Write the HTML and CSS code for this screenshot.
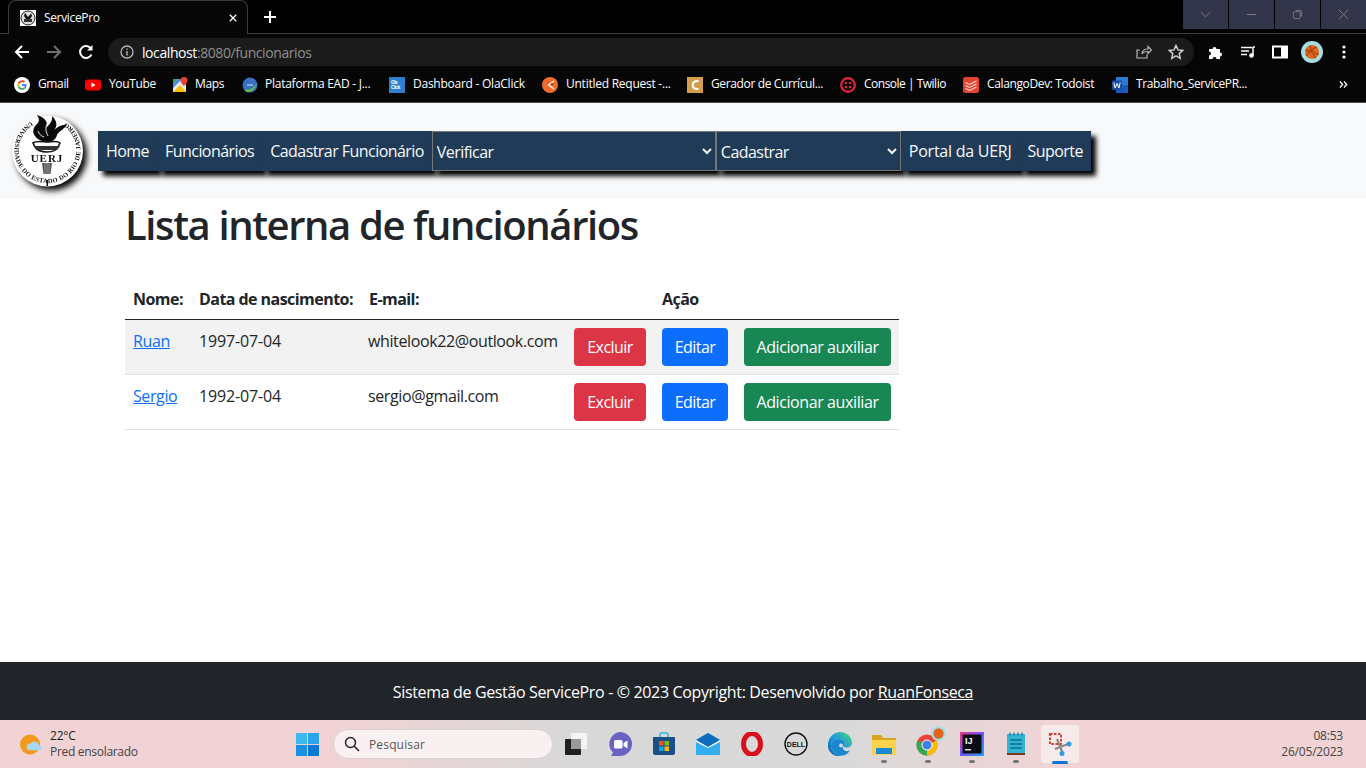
FILE: index.html
```html
<!DOCTYPE html>
<html lang="pt-BR">
<head>
<meta charset="utf-8">
<title>ServicePro</title>
<link rel="stylesheet" href="styles.css">
</head>
<body>
<div class="browser">
  <div class="tabbar">
    <div class="tab">
      <svg class="favicon" viewBox="0 0 16 16"><rect width="16" height="16" fill="#fff"/><circle cx="8" cy="8" r="7" fill="#ddd" stroke="#222"/><path d="M5 3c2 1 1 3 3 4 1-2 3-2 3-4l1 3-2 3H6L4 6z" fill="#111"/><rect x="4" y="9" width="8" height="3" fill="#333"/></svg>
      <span class="tab-title">ServicePro</span>
      <svg class="tab-close" viewBox="0 0 10 10"><path d="M1 1l8 8M9 1l-8 8" stroke="#fff" stroke-width="1.600"/></svg>
    </div>
    <svg class="newtab" viewBox="0 0 12 12"><path d="M6 0v12M0 6h12" stroke="#fff" stroke-width="2"/></svg>
    <div class="winctrls">
      <div class="winbtn"><svg viewBox="0 0 12 12"><path d="M1 3.500l5 5 5-5" fill="none" stroke="#7e808c"/></svg></div>
      <div class="winbtn"><svg viewBox="0 0 12 12"><path d="M1 6h10" stroke="#7e808c"/></svg></div>
      <div class="winbtn"><svg viewBox="0 0 12 12"><rect x="1.500" y="3" width="7.500" height="7.500" rx="1.500" fill="none" stroke="#7e808c"/><path d="M4 1.500h5a1.500 1.500 0 0 1 1.500 1.500v5" fill="none" stroke="#7e808c"/></svg></div>
      <div class="winbtn"><svg viewBox="0 0 12 12"><path d="M1 1l10 10M11 1L1 11" stroke="#7e808c"/></svg></div>
    </div>
  </div>
  <div class="toolbar">
    <svg class="navicon" viewBox="0 0 16 16"><path d="M15 8H2M8 2L2 8l6 6" fill="none" stroke="#fff" stroke-width="2"/></svg>
    <svg class="navicon" viewBox="0 0 16 16"><path d="M1 8h13M8 2l6 6-6 6" fill="none" stroke="#6f6f6f" stroke-width="2"/></svg>
    <svg class="navicon" viewBox="0 0 16 16"><path d="M13.500 10.500A6 6 0 1 1 13 4.500" fill="none" stroke="#fff" stroke-width="2"/><path d="M14.500 1v5.500H9z" fill="#fff"/></svg>
    <div class="omnibox">
      <svg class="info" viewBox="0 0 14 14"><circle cx="7" cy="7" r="6" fill="none" stroke="#b5b5b5" stroke-width="1.300"/><path d="M7 6v4.500M7 3.500v1.300" stroke="#b5b5b5" stroke-width="1.400"/></svg>
      <span class="url"><span class="host">localhost</span>:8080/funcionarios</span>
      <svg class="omni-act share" viewBox="0 0 16 16"><path d="M11 10.500V14H1V6h3M6 10c0-3.500 3-5 6-5V2.500L15.500 6 12 9.500V7.500c-2.500 0-5 .5-6 2.500z" fill="none" stroke="#b5b5b5" stroke-width="1.200"/></svg>
      <svg class="omni-act star" viewBox="0 0 16 16"><path d="M8 1.500l2 4.400 4.800.5-3.600 3.200 1 4.700L8 11.900l-4.200 2.400 1-4.700L1.200 6.400 6 5.900z" fill="none" stroke="#d0d0d0" stroke-width="1.500"/></svg>
    </div>
    <div class="extensions">
      <svg class="ext" viewBox="0 0 16 16"><path d="M1 5h3.500a2 2 0 1 1 4 0H12v3.500a2 2 0 1 1 0 4V15H8.500a2 2 0 1 0-4 0H1v-3.500a2 2 0 1 0 0-4z" fill="#fff"/></svg>
      <svg class="ext" viewBox="0 0 16 16"><path d="M1 3.500h11M1 7h8M1 10.500h6" stroke="#fff" stroke-width="1.400"/><path d="M13 3v8" stroke="#fff" stroke-width="1.500"/><circle cx="11.500" cy="11.500" r="2.300" fill="#fff"/><path d="M13 3h2" stroke="#fff" stroke-width="1.500"/></svg>
      <svg class="ext" viewBox="0 0 16 16"><rect x="1" y="2.500" width="14" height="11" fill="none" stroke="#fff" stroke-width="2"/><rect x="9" y="2.500" width="6" height="11" fill="#fff"/></svg>
      <svg class="avatar" viewBox="0 0 22 22"><circle cx="11" cy="11" r="11" fill="#a5e0e0"/><circle cx="11" cy="11" r="7" fill="#e2641f"/><path d="M4.500 9c4 0 9 3 10 8.500M9 4.300c0 4 4 9 9 9M5 15c3-4 7-8 11-9" fill="none" stroke="#6a2b0c" stroke-width=".7"/></svg>
      <svg class="ext ext-last" viewBox="0 0 16 16"><circle cx="8" cy="3" r="1.600" fill="#fff"/><circle cx="8" cy="8" r="1.600" fill="#fff"/><circle cx="8" cy="13" r="1.600" fill="#fff"/></svg>
    </div>
  </div>
  <div class="bookmarks">
    <div class="bm"><svg class="bmi" viewBox="0 0 16 16"><circle cx="8" cy="8" r="8" fill="#fff"/><path d="M8 3.300a4.700 4.700 0 0 1 3.200 1.200L9.900 5.800A3 3 0 0 0 5.200 7L3.800 5.800A4.700 4.700 0 0 1 8 3.300z" fill="#ea4335"/><path d="M3.800 5.800L5.200 7a3 3 0 0 0 0 2l-1.400 1.200a4.700 4.700 0 0 1 0-4.400z" fill="#fbbc05"/><path d="M5.200 9A3 3 0 0 0 10 10.400l1.300 1.100A4.700 4.700 0 0 1 3.800 10.200z" fill="#34a853"/><path d="M8 7h4.500c.3 1.700-.2 3.300-1.200 4.500L10 10.400c.4-.3.700-.8.800-1.400H8z" fill="#4285f4"/></svg><span>Gmail</span></div>
    <div class="bm"><svg class="bmi" viewBox="0 0 16 16"><rect y="2.500" width="16" height="11" rx="3" fill="#f00"/><path d="M6.500 5.500l4 2.500-4 2.500z" fill="#fff"/></svg><span>YouTube</span></div>
    <div class="bm"><svg class="bmi bmi-tight" viewBox="0 0 16 16"><rect x="1" y="2" width="13" height="13" fill="#e8eaed"/><path d="M1 15L8 8l6 7z" fill="#fbbc04"/><path d="M1 2h5L1 8z" fill="#34a853"/><path d="M6 2L1 8v3L10 2z" fill="#4285f4"/><path d="M12 0a3.500 3.500 0 0 1 3.500 3.500C15.500 6 12 9 12 9S8.500 6 8.500 3.500A3.500 3.500 0 0 1 12 0z" fill="#ea4335"/></svg><span>Maps</span></div>
    <div class="bm"><svg class="bmi bmi-tight" viewBox="0 0 16 16"><circle cx="8" cy="8" r="7.500" fill="#3a70c0"/><path d="M2 12c5 2 10-1 13-6-1 6-6 10-11 9z" fill="#5fb65a"/><path d="M5 8h6" stroke="#cfe3ff"/></svg><span class="wide">Plataforma EAD - J...</span></div>
    <div class="bm"><svg class="bmi" viewBox="0 0 16 16"><rect width="16" height="16" fill="#2f7fd1"/><text class="ola" x="2" y="7">Ola</text><text class="ola" x="2" y="12">Click</text></svg><span class="wide">Dashboard - OlaClick</span></div>
    <div class="bm"><svg class="bmi" viewBox="0 0 16 16"><circle cx="8" cy="8" r="8" fill="#f26b2e"/><path d="M12 4L6.500 8l5.500 4" fill="none" stroke="#fff" stroke-width="1.300"/><circle cx="10" cy="7" r="1" fill="#7a2b0b"/></svg><span class="wide">Untitled Request -...</span></div>
    <div class="bm"><svg class="bmi" viewBox="0 0 16 16"><rect width="16" height="16" fill="#d29e4c"/><path d="M11.500 4.500a4 4 0 1 0 0 7" fill="none" stroke="#fff" stroke-width="2"/></svg><span>Gerador de Currícul...</span></div>
    <div class="bm"><svg class="bmi" viewBox="0 0 16 16"><circle cx="8" cy="8" r="6.800" fill="none" stroke="#e2223f" stroke-width="2.200"/><circle cx="6" cy="6" r="1.300" fill="#e2223f"/><circle cx="10" cy="6" r="1.300" fill="#e2223f"/><circle cx="6" cy="10" r="1.300" fill="#e2223f"/><circle cx="10" cy="10" r="1.300" fill="#e2223f"/></svg><span class="narrow">Console | Twilio</span></div>
    <div class="bm"><svg class="bmi" viewBox="0 0 16 16"><rect width="16" height="16" rx="2.500" fill="#e44332"/><path d="M2.500 5.500l4 2 7-3.500M2.500 8.500l4 2 7-3.500M2.500 11.500l4 2 7-3.500" fill="none" stroke="#fbdcd7" stroke-width="1.100"/></svg><span>CalangoDev: Todoist</span></div>
    <div class="bm"><svg class="bmi" viewBox="0 0 16 16"><rect x="4" y="0" width="12" height="16" rx="1" fill="#2b7cd3"/><rect x="4" y="8" width="12" height="8" fill="#185abd"/><rect y="3.500" width="10" height="9.500" rx="1" fill="#1a4ea3"/><path d="M1.800 5.500l1.300 5.500 1.900-4.500 1.900 4.500 1.300-5.500" fill="none" stroke="#fff" stroke-width="1"/></svg><span>Trabalho_ServicePR...</span></div>
    <svg class="bm-more" viewBox="0 0 10 10"><path d="M1 1.500l3 3.500-3 3.500M5.500 1.500l3 3.500-3 3.500" fill="none" stroke="#fff" stroke-width="1.500"/></svg>
  </div>
</div>

<header class="site-header">
  <svg class="seal" viewBox="0 0 74 74">
    <defs>
      <path id="arcRing" d="M20 7.500A33 33 0 1 0 53 7.500"/>
    </defs>
    <circle cx="36.500" cy="37" r="35.500" fill="#fff"/>
    <text class="seal-ring" textLength="170"><textPath href="#arcRing">UNIVERSIDADE DO ESTADO DO RIO DE JANEIRO</textPath></text>
    <path d="M34 28C22 25 19 16 26 10 29 7 28 4 26 1 34 3 38 9 35 14 38 11 42 7 41 2 46 7 47 12 43 16 47 13 51 10 56 11 53 15 47 18 46 21 45 25 42 27 38 28z" fill="#0a0a0a"/>
    <path d="M27 17c1 3 3 5 6 6M36 10c-2 4-1 8 1 12" fill="none" stroke="#fff" stroke-width=".9"/>
    <path d="M22 29c4-3 10-1 14-1s10-2 13 1l-2 4c-2 4-5 5-11 5s-10-2-12-5z" fill="#fff" stroke="#111" stroke-width="1.600"/>
    <path d="M24 32h25l-3 4H27z" fill="#333"/>
    <text class="seal-uerj" x="36" y="47.500" text-anchor="middle">UERJ</text>
    <path d="M31 49h10l-1.500 11h-7z" fill="#555"/>
    <path d="M34 49v11M36 49v11M38 49v11" stroke="#ccc" stroke-width=".5"/>
    <rect x="35.500" y="66" width="1.500" height="6" fill="#111"/>
  </svg>
  <nav class="main-nav">
    <a class="nav-item" href="#">Home</a>
    <a class="nav-item" href="#">Funcionários</a>
    <a class="nav-item" href="#">Cadastrar Funcionário</a>
    <select class="nav-select sel-verificar"><option>Verificar</option></select>
    <select class="nav-select sel-cadastrar"><option>Cadastrar</option></select>
    <a class="nav-item nav-portal" href="#">Portal da UERJ</a>
    <a class="nav-item" href="#">Suporte</a>
  </nav>
</header>

<main class="container">
  <h1 class="title">Lista interna de funcionários</h1>
  <table class="staff">
    <colgroup>
      <col class="c1"><col class="c2"><col class="c3"><col class="c4"><col class="c5"><col class="c6">
    </colgroup>
    <thead>
      <tr><th>Nome:</th><th>Data de nascimento:</th><th>E-mail:</th><th></th><th>Ação</th><th></th></tr>
    </thead>
    <tbody>
      <tr class="striped">
        <td><a href="#">Ruan</a></td><td class="date">1997-07-04</td><td class="mail">whitelook22@outlook.com</td>
        <td><button class="btn red">Excluir</button></td>
        <td><button class="btn blue">Editar</button></td>
        <td><button class="btn green">Adicionar auxiliar</button></td>
      </tr>
      <tr>
        <td><a href="#">Sergio</a></td><td class="date">1992-07-04</td><td class="mail">sergio@gmail.com</td>
        <td><button class="btn red">Excluir</button></td>
        <td><button class="btn blue">Editar</button></td>
        <td><button class="btn green">Adicionar auxiliar</button></td>
      </tr>
    </tbody>
  </table>
</main>

<footer class="site-footer">Sistema de Gestão ServicePro - © 2023 Copyright: Desenvolvido por&nbsp;<a href="#">RuanFonseca</a></footer>

<div class="taskbar">
  <div class="weather">
    <svg class="weather-icon" viewBox="0 0 24 24"><circle cx="10.500" cy="12" r="10.500" fill="#f39a1e"/><path d="M10 18a3.500 3.500 0 0 1 1-7 5 5 0 0 1 9 2 2.600 2.600 0 0 1 1 5z" fill="#a9d6f5"/></svg>
    <div class="weather-text"><div class="w1">22°C</div><div class="w2">Pred ensolarado</div></div>
  </div>
  <div class="task-center">
    <div class="cell"><svg class="tsk start" viewBox="0 0 24 24"><rect x="0" y="0" width="11.500" height="11.500" fill="#3fb8f2"/><rect x="12.500" y="0" width="11.500" height="11.500" fill="#2aa5ec"/><rect x="0" y="12.500" width="11.500" height="11.500" fill="#1a8fe0"/><rect x="12.500" y="12.500" width="11.500" height="11.500" fill="#0a78d4"/></svg></div>
    <div class="search">
      <svg class="search-i" viewBox="0 0 16 16"><circle cx="6.500" cy="6.500" r="5" fill="none" stroke="#222" stroke-width="1.500"/><path d="M10.500 10.500L15 15" stroke="#222" stroke-width="1.600"/></svg>
      <span>Pesquisar</span>
    </div>
    <div class="cell"><svg class="tsk" viewBox="0 0 24 24"><rect x="1" y="7" width="16" height="16" rx="1" fill="#1f1f1f"/><rect x="7" y="1" width="16" height="16" rx="1" fill="#f4f4f4"/><rect x="7" y="7" width="10" height="10" fill="#9a9a9a"/></svg></div>
    <div class="cell"><svg class="tsk" viewBox="0 0 24 24"><path d="M12 0a12 12 0 0 1 0 24H3l2-3.500A12 12 0 0 1 12 0z" fill="#6a62c4"/><rect x="6" y="8" width="8.500" height="8.500" rx="1.500" fill="#fff"/><path d="M15.500 11l4-2.500v8l-4-2.500z" fill="#fff"/></svg></div>
    <div class="cell"><svg class="tsk" viewBox="0 0 24 24"><path d="M8 6V2.500a1.500 1.500 0 0 1 1.500-1.500h5A1.500 1.500 0 0 1 16 2.500V6" fill="none" stroke="#2fb5e0" stroke-width="1.500"/><path d="M1 5h22v16a2 2 0 0 1-2 2H3a2 2 0 0 1-2-2z" fill="#1c4f86"/><rect x="7" y="9" width="4.500" height="4.500" fill="#f25022"/><rect x="12.500" y="9" width="4.500" height="4.500" fill="#7fba00"/><rect x="7" y="14.500" width="4.500" height="4.500" fill="#00a4ef"/><rect x="12.500" y="14.500" width="4.500" height="4.500" fill="#ffb900"/></svg></div>
    <div class="cell"><svg class="tsk" viewBox="0 0 24 24"><path d="M0 8L12 1l12 7v15H0z" fill="#32aef0"/><path d="M0 8L12 1l12 7-12 7z" fill="#0f6cbd"/><path d="M0 8l12 7 12-7v2l-12 6L0 10z" fill="#fff"/></svg></div>
    <div class="cell"><svg class="tsk" viewBox="0 0 24 24"><ellipse cx="12" cy="12" rx="8.500" ry="10.500" fill="none" stroke="#d9101c" stroke-width="5"/></svg></div>
    <div class="cell"><svg class="tsk" viewBox="0 0 24 24"><circle cx="12" cy="12" r="11" fill="none" stroke="#111" stroke-width="1.400"/><text class="dell" x="12" y="14.500" text-anchor="middle">DELL</text></svg></div>
    <div class="cell"><svg class="tsk" viewBox="0 0 24 24"><defs><linearGradient id="edge" x1="0" y1="1" x2="1" y2="0"><stop offset="0" stop-color="#0c59a4"/><stop offset=".5" stop-color="#1b9de2"/><stop offset="1" stop-color="#52d06e"/></linearGradient></defs><path d="M12 0c7 0 12 5 12 11 0 5-7 6-9 3 3-1 2-7-4-7C5 7 3 11 3 14c0 5 5 10 11 9.500C8 26-1 21 0 12 .5 5 6 0 12 0z" fill="url(#edge)"/><path d="M3 14c0-3 2-7 8-7 6 0 7 6 4 7-1 4 3 7 7 4-2 4-5 5.500-8 5.500-6 .500-11-4.500-11-9.500z" fill="#1a86d0"/><circle cx="13" cy="13.500" r="2" fill="#d9d9d9"/></svg></div>
    <div class="cell"><svg class="tsk" viewBox="0 0 24 24"><path d="M0 3h9l2 3h13v17H0z" fill="#d9a520"/><rect x="0" y="8" width="24" height="15" fill="#fbd34c"/><rect x="4" y="16" width="16" height="6" fill="#1a87d7"/></svg><i class="dot"></i></div>
    <div class="cell"><svg class="tsk" viewBox="0 0 24 24"><circle cx="11" cy="13" r="10.500" fill="#ea4335"/><path d="M11 13L1.500 8.500A10.500 10.500 0 0 0 11 23.500z" fill="#34a853"/><path d="M11 13l9.500-4.500A10.500 10.500 0 0 1 11 23.500z" fill="#fbbc05"/><circle cx="11" cy="13" r="5" fill="#3d7ef0" stroke="#fff"/></svg><svg class="badge" viewBox="0 0 16 16"><circle cx="8" cy="8" r="8" fill="#a5e0e0"/><circle cx="8" cy="8" r="5.500" fill="#e2641f"/></svg><i class="dot"></i></div>
    <div class="cell"><svg class="tsk" viewBox="0 0 24 24"><defs><linearGradient id="ij" x1="0" y1="0" x2="1" y2="1"><stop offset="0" stop-color="#f5317e"/><stop offset=".5" stop-color="#6b57ff"/><stop offset="1" stop-color="#1ea6f5"/></linearGradient></defs><rect width="24" height="24" fill="url(#ij)"/><rect x="2.500" y="2.500" width="19" height="19" fill="#0b0b14"/><text class="ij" x="5" y="12">IJ</text><rect x="5" y="17" width="6" height="1.500" fill="#ddd"/></svg><i class="dot"></i></div>
    <div class="cell"><svg class="tsk" viewBox="0 0 24 24"><rect x="3" y="2" width="18" height="20" fill="#33b4d4"/><path d="M6 8h12M6 12h12M6 16h12" stroke="#0d6f8f" stroke-width="1.500"/><path d="M6 .500v3M10 .500v3M14 .500v3M18 .500v3" stroke="#0d6f8f" stroke-width="1.200"/><rect x="3" y="21" width="18" height="2" fill="#7a3b1a"/></svg><i class="dot"></i></div>
    <div class="cell cell-active"><svg class="tsk" viewBox="0 0 24 24"><rect x="2" y="2" width="11" height="10" fill="none" stroke="#d8402b" stroke-width="2" stroke-dasharray="2.500 1.500"/><path d="M9 7l6 15M20 12L7 17" stroke="#8a8a8a" stroke-width="2.200"/><circle cx="21" cy="12" r="2.500" fill="#2e9be0"/><circle cx="14" cy="21.500" r="2.500" fill="#2e9be0"/></svg><i class="bar"></i></div>
  </div>
  <div class="clock"><div>08:53</div><div>26/05/2023</div></div>
</div>
</body>
</html>
```

FILE: styles.css
```css
* { box-sizing: border-box; }
html, body { margin: 0; height: 100%; }
body {
  width: 1366px; height: 768px; overflow: hidden;
  display: flex; flex-direction: column;
  font-family: "Open Sans", "Noto Sans", sans-serif;
  font-size: 16px; color: #212529; background: #fff;
}

/* browser chrome */
.browser { flex: none; height: 103px; background: #060606; border-bottom: 1px solid #4a4a4a; color: #fff; }
.tabbar { height: 34px; background: #000; border-bottom: 1px solid #3c3c3c; display: flex; align-items: flex-start; padding-left: 8px; position: relative; }
.tab { width: 240px; height: 34px; background: #060606; border: 1px solid #3c3c3c; border-bottom: 0; border-radius: 8px 8px 0 0; display: flex; align-items: center; padding: 0 7px 0 11px; }
.favicon { width: 16px; height: 16px; }
.tab-title { margin-left: 8px; font-size: 12px; flex: 1; letter-spacing: -.35px; }
.tab-close { width: 8px; height: 8px; margin-right: 3px; }
.newtab { width: 12px; height: 12px; margin: 11px 0 0 16px; }
.winctrls { position: absolute; right: 0; top: 0; display: flex; gap: 1px; }
.winbtn { width: 45px; height: 29px; background: #33354a; display: flex; align-items: center; justify-content: center; }
.winbtn svg { width: 11px; height: 11px; }

.toolbar { height: 33px; display: flex; align-items: center; padding: 3px 0 0 14px; }
.navicon { width: 16px; height: 16px; margin-right: 16px; flex: none; }
.navicon:nth-child(3) { margin-right: 14px; }
.omnibox { flex: none; width: 1086px; height: 28px; border-radius: 14px; background: #1b1b1b; display: flex; align-items: center; padding: 0 10px 0 12px; font-size: 14px; }
.info { width: 14px; height: 14px; }
.url { margin-left: 8px; color: #8f8f8f; flex: 1; letter-spacing: -.42px; }
.host { color: #fff; }
.omni-act { width: 16px; height: 16px; }
.share { margin-right: 16px; }
.extensions { display: flex; align-items: center; margin-left: 14px; }
.ext { width: 16px; height: 16px; margin-right: 16px; flex: none; }
.ext-last { margin-right: 0; }
.avatar { width: 22px; height: 22px; margin: 0 13px 0 -3px; flex: none; }

.bookmarks {
  height: 35px; padding-left: 14px; position: relative;
  display: grid; align-items: center;
  grid-template-columns: 71px 87px 70px 147px 153px 145px 153px 123px 149px 200px;
}
.bm { display: flex; align-items: center; font-size: 12px; white-space: nowrap; letter-spacing: -.37px; }
.bm span { margin-top: -2px; }
.bm .wide { letter-spacing: -.25px; }
.bm .narrow { letter-spacing: -.5px; }
.bmi { width: 16px; height: 16px; margin-right: 8px; flex: none; }
.bmi-tight { margin-right: 7px; }
.ola { font: bold 4.500px "Liberation Sans", sans-serif; fill: #fff; }
.bm-more { width: 9px; height: 9px; position: absolute; left: 1339px; top: 13px; }

/* header */
.site-header { flex: none; height: 96px; background: #f8f9fa; display: flex; align-items: center; padding-left: 11px; }
.seal { width: 74px; height: 74px; margin-right: 13px; filter: drop-shadow(4px 4px 3px #000); flex: none; }
.seal-ring { font: bold 6.500px "Liberation Serif", serif; fill: #111; }
.seal-uerj { font: bold 11px "Liberation Serif", serif; fill: #111; letter-spacing: 1px; }
.main-nav { display: flex; height: 40px; color: #f8f9fa; }
.nav-item { height: 40px; padding: 0 8px; background: #1f3b57; color: #f8f9fa; text-decoration: none; line-height: 40px; box-shadow: 5px 5px 5px #000; white-space: nowrap; position: relative; letter-spacing: -.55px; }
.nav-portal { letter-spacing: -.25px; }
.nav-select { height: 40px; background: #1f3b57; color: #f8f9fa; border: 1px solid #777; border-radius: 0; font: inherit; font-size: 16px; letter-spacing: -.55px; padding: 2px 0 0; box-shadow: 5px 5px 5px #000; position: relative; }
.sel-verificar { width: 284px; }
.sel-cadastrar { width: 185px; }

/* content */
.container { flex: 1; padding: 0 0 0 125px; }
.title { margin: 2px 0 30px; font-size: 40px; line-height: 48px; font-weight: 600; letter-spacing: -1.4px; color: #212529; }
.staff { border-collapse: collapse; table-layout: fixed; width: 774px; }
.c1 { width: 66px; } .c2 { width: 170px; } .c3 { width: 205px; } .c4 { width: 88px; } .c5 { width: 82px; } .c6 { width: 163px; }
.staff th { text-align: left; padding: 8px; height: 40px; font-weight: 700; border-bottom: 1px solid #212529; letter-spacing: -.55px; white-space: nowrap; }
.staff td { padding: 8px; height: 55px; vertical-align: top; border-bottom: 1px solid #dee2e6; white-space: nowrap; letter-spacing: -.4px; }
.staff td:nth-child(-n+3) { padding-top: 10px; }
.staff .date { letter-spacing: -.15px; }
.staff .mail { letter-spacing: -.38px; padding-left: 7px; }
.striped td { background: #f2f2f2; }
.staff a { color: #0d6efd; }
.btn { height: 38px; padding: 0; border: 0; border-radius: 4px; color: #fff; font: inherit; letter-spacing: -.4px; display: block; }
.red { width: 72px; background: #dc3545; letter-spacing: -.55px; }
.blue { width: 66px; background: #0d6efd; letter-spacing: -.55px; }
.green { width: 147px; background: #198754; }

/* footer */
.site-footer { flex: none; height: 58px; background: #212529; color: #fff; display: flex; align-items: center; justify-content: center; letter-spacing: -.35px; padding-top: 2px; }
.site-footer a { color: #fff; }

/* taskbar */
.taskbar { flex: none; height: 48px; position: relative; display: flex; align-items: center; background: linear-gradient(90deg, #f1d3d5 0, #f1d3d5 25%, #d8d8d8 42%, #d9d9d9 62%, #f1d3d5 78%, #f1d3d5 100%); font-size: 12px; }
.weather { display: flex; align-items: center; margin-left: 20px; width: 265px; }
.weather-icon { width: 23px; height: 23px; margin-right: 7px; }
.w1 { color: #1c1c1c; font-size: 12px; letter-spacing: -.2px; line-height: 16px; }
.w2 { color: #444; font-size: 12px; letter-spacing: -.3px; line-height: 16px; }
.task-center { display: flex; align-items: center; height: 48px; }
.cell { width: 44px; height: 48px; display: flex; align-items: center; justify-content: center; position: relative; }
.tsk { width: 24px; height: 24px; }
.start { width: 23px; height: 23px; }
.search { width: 220px; height: 30px; margin: 0 1px 0 4px; border-radius: 15px; background: #f9f1f1; border: 1px solid #d8d2d2; display: flex; align-items: center; padding-left: 10px; color: #555; font-size: 12px; letter-spacing: .15px; }
.search-i { width: 16px; height: 16px; margin-right: 9px; }
.dot { position: absolute; left: 19px; bottom: 5px; width: 6px; height: 3px; border-radius: 2px; background: #777; }
.bar { position: absolute; left: 14px; bottom: 4px; width: 16px; height: 3px; border-radius: 2px; background: #0a78d4; }
.badge { position: absolute; width: 15px; height: 15px; left: 25px; top: 6px; }
.cell-active::before { content: ""; position: absolute; left: 3px; top: 5px; width: 38px; height: 38px; border-radius: 4px; background: #f6eaea; }
.cell-active .tsk, .cell-active .bar { z-index: 1; }
.dell { font: bold 7px "Liberation Sans", sans-serif; fill: #111; }
.ij { font: bold 9px "Liberation Sans", sans-serif; fill: #fff; }
.clock { position: absolute; right: 23px; top: 8px; text-align: right; color: #444; font-size: 12px; line-height: 16px; letter-spacing: -.2px; }
```
